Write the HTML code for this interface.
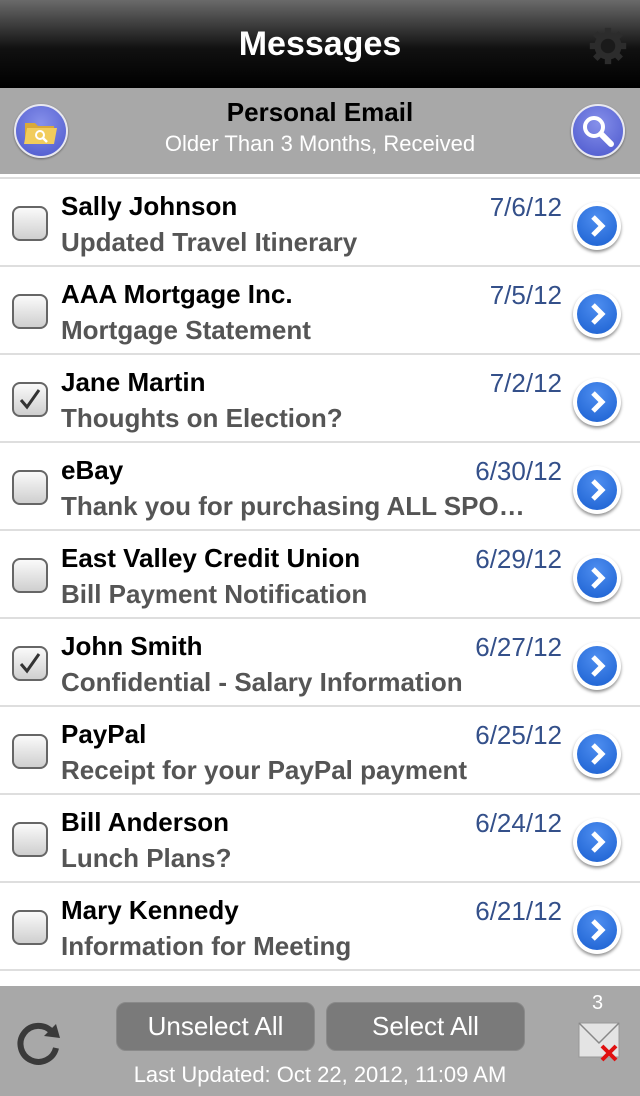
<!DOCTYPE html>
<html><head><style>
*{margin:0;padding:0;box-sizing:border-box}
body{width:640px;height:1096px;overflow:hidden;background:#fff;font-family:"Liberation Sans",Arial,sans-serif;position:relative}
.hdr{position:absolute;top:0;left:0;width:640px;height:88px;background:linear-gradient(#6a6a6a 0%,#3a3a3a 30%,#111 55%,#000 100%);}
.hdr h1{position:absolute;top:25px;width:100%;text-align:center;color:#fff;font-size:34px;font-weight:bold}
.sub{position:absolute;top:88px;left:0;width:640px;height:86px;background:#a8a8a8}
.sub .t{position:absolute;top:9px;width:100%;text-align:center;font-size:26px;font-weight:bold;color:#000}
.sub .s{position:absolute;top:43px;width:100%;text-align:center;font-size:22px;color:#fff}
.circ{position:absolute;top:16px;width:54px;height:54px;border-radius:50%;background:radial-gradient(circle at 50% 35%,#8690ea,#4a56cc);border:2px solid #e8e8f0;box-shadow:0 1px 2px rgba(0,0,0,.4)}
.row{position:absolute;left:0;width:640px;height:88px;border-bottom:2px solid #dedede}
.cb{position:absolute;left:12px;top:27px;width:36px;height:35px;border:2px solid #666;border-radius:8px;background:linear-gradient(#fafafa,#cfcfcf)}
.nm{position:absolute;left:61px;top:12px;font-size:26px;font-weight:bold;color:#000}
.sj{position:absolute;left:61px;top:48px;font-size:26px;font-weight:bold;color:#555;white-space:nowrap}
.dt{position:absolute;right:78px;top:13px;font-size:26px;color:#34508a}
.ch{position:absolute;left:573px;top:23px;width:48px;height:48px;border-radius:50%;background:#fff;box-shadow:0 2px 3px rgba(0,0,0,.45)}
.ch div{position:absolute;left:4px;top:4px;width:40px;height:40px;border-radius:50%;background:radial-gradient(circle at 50% 30%,#4e8ef0,#1a5fd0)}
.ftr{position:absolute;top:986px;left:0;width:640px;height:110px;background:#a8a8a8}
.btn{position:absolute;top:16px;width:199px;height:49px;border-radius:10px;background:#7a7a7a;border:1px solid #8a8a8a;color:#fff;font-size:26px;text-align:center;line-height:47px}
.lu{position:absolute;top:76px;width:100%;text-align:center;color:#fff;font-size:22px}
</style></head><body>
<div class="hdr"><h1>Messages</h1>
<svg style="position:absolute;left:588px;top:26px" width="40" height="40" viewBox="0 0 44 44"><g fill="#2c2c2c"><circle cx="22" cy="22" r="15"/><g stroke="#2c2c2c" stroke-width="7"><line x1="22" y1="2" x2="22" y2="42"/><line x1="2" y1="22" x2="42" y2="22"/><line x1="8" y1="8" x2="36" y2="36"/><line x1="36" y1="8" x2="8" y2="36"/></g></g><circle cx="22" cy="22" r="8" fill="#1a1a1a"/></svg>
</div>
<div class="sub"><div class="t">Personal Email</div><div class="s">Older Than 3 Months, Received</div>
<div class="circ" style="left:14px"><svg width="50" height="50" viewBox="0 0 50 50"><path d="M9 17h10l3 3h16v18H9z" fill="#d9a93a"/><path d="M11 22h30l-3 16H8z" fill="#f1cc5c"/><circle cx="24" cy="29" r="4" fill="none" stroke="#fff" stroke-width="2"/><line x1="27" y1="32" x2="31" y2="36" stroke="#fff" stroke-width="2.5"/></svg></div>
<div class="circ" style="left:571px"><svg width="50" height="50" viewBox="0 0 50 50"><circle cx="21" cy="21" r="9" fill="none" stroke="#fff" stroke-width="4"/><line x1="28" y1="28" x2="38" y2="38" stroke="#fff" stroke-width="6" stroke-linecap="round"/></svg></div>
</div>
<div style="position:absolute;top:174px;left:0;width:640px;height:5px;border-bottom:2px solid #dedede"></div>

<div class="row" style="top:179px"><div class="cb"></div><div class="nm">Sally Johnson</div><div class="sj">Updated Travel Itinerary</div><div class="dt">7/6/12</div><div class="ch"><div><svg width="40" height="40"><path d="M16 11l9 9-9 9" fill="none" stroke="#fff" stroke-width="5"/></svg></div></div></div>
<div class="row" style="top:267px"><div class="cb"></div><div class="nm">AAA Mortgage Inc.</div><div class="sj">Mortgage Statement</div><div class="dt">7/5/12</div><div class="ch"><div><svg width="40" height="40"><path d="M16 11l9 9-9 9" fill="none" stroke="#fff" stroke-width="5"/></svg></div></div></div>
<div class="row" style="top:355px"><div class="cb"><svg width="32" height="31"><path d="M7 16l6 7 12-17" fill="none" stroke="#333" stroke-width="3"/></svg></div><div class="nm">Jane Martin</div><div class="sj">Thoughts on Election?</div><div class="dt">7/2/12</div><div class="ch"><div><svg width="40" height="40"><path d="M16 11l9 9-9 9" fill="none" stroke="#fff" stroke-width="5"/></svg></div></div></div>
<div class="row" style="top:443px"><div class="cb"></div><div class="nm">eBay</div><div class="sj">Thank you for purchasing ALL SPO…</div><div class="dt">6/30/12</div><div class="ch"><div><svg width="40" height="40"><path d="M16 11l9 9-9 9" fill="none" stroke="#fff" stroke-width="5"/></svg></div></div></div>
<div class="row" style="top:531px"><div class="cb"></div><div class="nm">East Valley Credit Union</div><div class="sj">Bill Payment Notification</div><div class="dt">6/29/12</div><div class="ch"><div><svg width="40" height="40"><path d="M16 11l9 9-9 9" fill="none" stroke="#fff" stroke-width="5"/></svg></div></div></div>
<div class="row" style="top:619px"><div class="cb"><svg width="32" height="31"><path d="M7 16l6 7 12-17" fill="none" stroke="#333" stroke-width="3"/></svg></div><div class="nm">John Smith</div><div class="sj">Confidential - Salary Information</div><div class="dt">6/27/12</div><div class="ch"><div><svg width="40" height="40"><path d="M16 11l9 9-9 9" fill="none" stroke="#fff" stroke-width="5"/></svg></div></div></div>
<div class="row" style="top:707px"><div class="cb"></div><div class="nm">PayPal</div><div class="sj">Receipt for your PayPal payment</div><div class="dt">6/25/12</div><div class="ch"><div><svg width="40" height="40"><path d="M16 11l9 9-9 9" fill="none" stroke="#fff" stroke-width="5"/></svg></div></div></div>
<div class="row" style="top:795px"><div class="cb"></div><div class="nm">Bill Anderson</div><div class="sj">Lunch Plans?</div><div class="dt">6/24/12</div><div class="ch"><div><svg width="40" height="40"><path d="M16 11l9 9-9 9" fill="none" stroke="#fff" stroke-width="5"/></svg></div></div></div>
<div class="row" style="top:883px"><div class="cb"></div><div class="nm">Mary Kennedy</div><div class="sj">Information for Meeting</div><div class="dt">6/21/12</div><div class="ch"><div><svg width="40" height="40"><path d="M16 11l9 9-9 9" fill="none" stroke="#fff" stroke-width="5"/></svg></div></div></div>

<div class="ftr">
<svg style="position:absolute;left:14px;top:30px" width="52" height="52" viewBox="0 0 52 52"><path d="M38 16A18 18 0 1 0 42 32" fill="none" stroke="#3a3a3a" stroke-width="6"/><path d="M30 20l16 2-4-14z" fill="#3a3a3a"/></svg>
<div class="btn" style="left:116px">Unselect All</div>
<div class="btn" style="left:326px">Select All</div>
<div class="lu">Last Updated: Oct 22, 2012, 11:09 AM</div>
<div style="position:absolute;left:592px;top:6px;color:#fff;font-size:20px">3</div>
<svg style="position:absolute;left:578px;top:36px" width="44" height="40" viewBox="0 0 44 40"><rect x="1" y="1" width="40" height="34" fill="#e4e4e4" stroke="#999"/><path d="M1 1l20 20 20-20" fill="none" stroke="#888" stroke-width="1.5"/><path d="M24 24l14 14M38 24l-14 14" stroke="#e01010" stroke-width="4"/></svg>
</div>
</body></html>
